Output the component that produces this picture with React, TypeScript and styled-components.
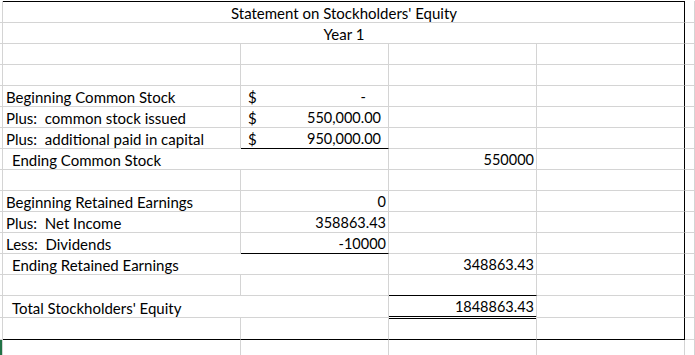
import React from "react";
import styled, { createGlobalStyle, css } from "styled-components";

const GRID = "#d4d4d4";
const INK = "#000000";
const SELECT = "#217346";

const GlobalStyle = createGlobalStyle`
  html, body {
    margin: 0;
    padding: 0;
    background: #ffffff;
    overflow: hidden;
  }
  body {
    font-family: Lato, "Open Sans", "Liberation Sans", sans-serif;
    font-size: 15px;
    color: ${INK};
  }
`;

const Sheet = styled.div`
  display: grid;
  grid-template-columns: 3px 238px 148px 148px 148px 1fr;
  grid-template-rows: 22px repeat(13, 21px) 22px 22px 30px;
  width: 695px;
  height: 354px;
  margin-top: 1px;
  overflow: hidden;
`;

type Edge = "grid" | "black" | "double" | "none";

interface CellProps {
  $span?: number;
  $align?: "left" | "right" | "center";
  $padL?: number;
  $padR?: number;
  $top?: Edge;
  $right?: Edge;
  $bottom?: Edge;
  $numeric?: boolean;
}

const edge = (e: Edge | undefined, side: "right" | "bottom" | "top") => {
  const prop = `border-${side}`;
  if (e === "none") return css`${prop}: none;`;
  if (e === "black") return css`${prop}: 1px solid ${INK};`;
  if (e === "double")
    return css`
      ${prop}: 3px double ${INK};
      margin-${side}: -1px;
    `;
  if (side === "top") return css``;
  return css`${prop}: 1px solid ${GRID};`;
};

const Cell = styled.div<CellProps>`
  box-sizing: border-box;
  grid-column: span ${(p) => p.$span ?? 1};
  display: flex;
  align-items: flex-end;
  justify-content: ${(p) =>
    p.$align === "right" ? "flex-end" : p.$align === "center" ? "center" : "flex-start"};
  padding-left: ${(p) => p.$padL ?? 3}px;
  padding-right: ${(p) => p.$padR ?? 2}px;
  font-size: ${(p) => (p.$numeric ? 14.5 : 15)}px;
  line-height: 18px;
  white-space: pre;
  overflow: visible;
  ${(p) => edge(p.$top, "top")}
  ${(p) => edge(p.$right ?? "grid", "right")}
  ${(p) => edge(p.$bottom ?? "grid", "bottom")}
`;

const Gutter = styled.div<{ $selected?: boolean }>`
  box-sizing: border-box;
  border-right: 1px solid ${GRID};
  border-bottom: ${(p) => (p.$selected ? "none" : `1px solid ${GRID}`)};
  background: ${(p) => (p.$selected ? SELECT : "transparent")};
  background-clip: content-box;
`;

const Accounting = styled(Cell)`
  justify-content: space-between;
  padding-left: 7px;
`;

const Currency = styled.span`
  font-size: 15px;
`;

const Amount = styled.span<{ $dash?: boolean }>`
  padding-right: ${(p) => (p.$dash ? 15 : 0)}px;
`;

type CellDef =
  | { kind: "empty"; span?: number; bottom?: Edge; right?: Edge }
  | { kind: "title"; text: string; top?: Edge }
  | { kind: "label"; text: string; span?: number; indent?: boolean; bottom?: Edge }
  | { kind: "num"; text: string; bottom?: Edge }
  | { kind: "acct"; text: string; dash?: boolean; bottom?: Edge };

interface RowDef {
  cells: CellDef[]; // columns A–D
  selected?: boolean;
}

const E: CellDef = { kind: "empty" };

const rows: RowDef[] = [
  { cells: [{ kind: "title", text: "Statement on Stockholders' Equity", top: "black" }] },
  { cells: [{ kind: "title", text: "Year 1" }] },
  { cells: [E, E, E, E] },
  { cells: [E, E, E, E] },
  {
    cells: [
      { kind: "label", text: "Beginning Common Stock" },
      { kind: "acct", text: "-", dash: true },
      E,
      E,
    ],
  },
  {
    cells: [
      { kind: "label", text: "Plus:  common stock issued" },
      { kind: "acct", text: "550,000.00" },
      E,
      E,
    ],
  },
  {
    cells: [
      { kind: "label", text: "Plus:  additional paid in capital" },
      { kind: "acct", text: "950,000.00", bottom: "black" },
      E,
      E,
    ],
  },
  {
    cells: [
      { kind: "label", text: "Ending Common Stock", span: 2, indent: true },
      { kind: "num", text: "550000" },
      E,
    ],
  },
  { cells: [E, E, E, E] },
  {
    cells: [
      { kind: "label", text: "Beginning Retained Earnings" },
      { kind: "num", text: "0" },
      E,
      E,
    ],
  },
  {
    cells: [
      { kind: "label", text: "Plus:  Net Income" },
      { kind: "num", text: "358863.43" },
      E,
      E,
    ],
  },
  {
    cells: [
      { kind: "label", text: "Less:  Dividends" },
      { kind: "num", text: "-10000", bottom: "black" },
      E,
      E,
    ],
  },
  {
    cells: [
      { kind: "label", text: "Ending Retained Earnings", span: 2, indent: true },
      { kind: "num", text: "348863.43" },
      E,
    ],
  },
  { cells: [E, E, { kind: "empty", bottom: "black" }, E] },
  {
    cells: [
      { kind: "label", text: "Total Stockholders' Equity", span: 2, indent: true },
      { kind: "num", text: "1848863.43", bottom: "double" },
      E,
    ],
  },
  {
    cells: [
      { kind: "empty", bottom: "black" },
      { kind: "empty", bottom: "black" },
      { kind: "empty", bottom: "black" },
      { kind: "empty", bottom: "black" },
    ],
  },
  { cells: [E, E, E, E], selected: true },
];

function renderCell(c: CellDef, key: number, last: boolean, boxed: boolean) {
  const right: Edge = last && boxed ? "black" : "grid";
  switch (c.kind) {
    case "title":
      return (
        <Cell key={key} $span={4} $align="center" $top={c.top} $right="black">
          {c.text}
        </Cell>
      );
    case "label":
      return (
        <Cell key={key} $span={c.span} $padL={c.indent ? 9 : 3} $bottom={c.bottom} $right={right}>
          {c.text}
        </Cell>
      );
    case "num":
      return (
        <Cell key={key} $numeric $align="right" $padR={2} $bottom={c.bottom} $right={right}>
          {c.text}
        </Cell>
      );
    case "acct":
      return (
        <Accounting key={key} $numeric $padR={7} $bottom={c.bottom} $right={right}>
          <Currency>$</Currency>
          <Amount $dash={c.dash}>{c.text}</Amount>
        </Accounting>
      );
    default:
      return <Cell key={key} $span={c.span} $bottom={c.bottom} $right={c.right ?? right} />;
  }
}

export default function App() {
  return (
    <>
      <GlobalStyle />
      <Sheet>
        {rows.map((row, r) => {
          const boxed = r < 16;
          return (
            <React.Fragment key={r}>
              <Gutter $selected={row.selected} />
              {row.cells.map((c, i) => renderCell(c, i, i === row.cells.length - 1, boxed))}
              <Cell $top={r === 0 ? "none" : undefined} />
            </React.Fragment>
          );
        })}
      </Sheet>
    </>
  );
}
